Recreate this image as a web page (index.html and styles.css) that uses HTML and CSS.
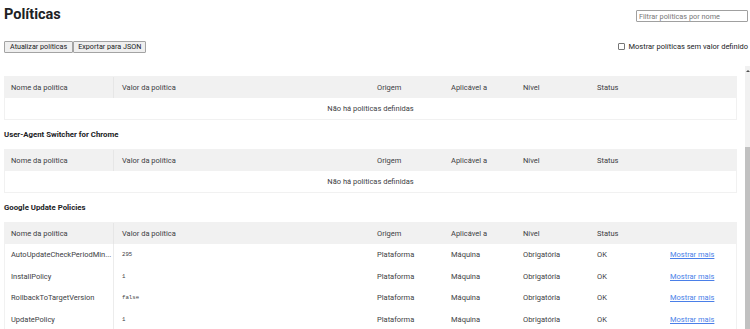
FILE: index.html
```html
<!DOCTYPE html>
<html lang="pt-BR">

<head>
    <meta charset="UTF-8">
    <meta name="viewport" content="width=device-width, initial-scale=1.0">
    <link rel="stylesheet" href="styles.css">
</head>

<body>

    <div class="page-header">
        <div class="header-top">
            <h1 class="page-title">Políticas</h1>
            <input type="text" class="filter-input" placeholder="Filtrar políticas por nome">
        </div>
        <div class="header-bottom">
            <div class="buttons">
                <button class="btn">Atualizar políticas</button>
                <button class="btn">Exportar para JSON</button>
            </div>
            <label class="show-unset">
                <input type="checkbox" class="unset-box">
                <span>Mostrar políticas sem valor definido</span>
            </label>
        </div>
    </div>

    <div class="main">
        <div class="content">

            <div class="policy-table">
                <div class="row head">
                    <div class="cell name">Nome da política</div>
                    <div class="cell value">Valor da política</div>
                    <div class="cell">Origem</div>
                    <div class="cell">Aplicável a</div>
                    <div class="cell">Nível</div>
                    <div class="cell">Status</div>
                    <div class="cell"></div>
                </div>
                <div class="empty-row">Não há políticas definidas</div>
            </div>

            <h3 class="section-title">User-Agent Switcher for Chrome</h3>
            <div class="policy-table">
                <div class="row head">
                    <div class="cell name">Nome da política</div>
                    <div class="cell value">Valor da política</div>
                    <div class="cell">Origem</div>
                    <div class="cell">Aplicável a</div>
                    <div class="cell">Nível</div>
                    <div class="cell">Status</div>
                    <div class="cell"></div>
                </div>
                <div class="empty-row">Não há políticas definidas</div>
            </div>

            <h3 class="section-title">Google Update Policies</h3>
            <div class="policy-table">
                <div class="row head">
                    <div class="cell name">Nome da política</div>
                    <div class="cell value">Valor da política</div>
                    <div class="cell">Origem</div>
                    <div class="cell">Aplicável a</div>
                    <div class="cell">Nível</div>
                    <div class="cell">Status</div>
                    <div class="cell"></div>
                </div>
                <div class="row">
                    <div class="cell name">AutoUpdateCheckPeriodMin...</div>
                    <div class="cell value"><span class="mono">295</span></div>
                    <div class="cell">Plataforma</div>
                    <div class="cell">Máquina</div>
                    <div class="cell">Obrigatória</div>
                    <div class="cell">OK</div>
                    <div class="cell"><a href="#" class="more">Mostrar mais</a></div>
                </div>
                <div class="row">
                    <div class="cell name">InstallPolicy</div>
                    <div class="cell value"><span class="mono">1</span></div>
                    <div class="cell">Plataforma</div>
                    <div class="cell">Máquina</div>
                    <div class="cell">Obrigatória</div>
                    <div class="cell">OK</div>
                    <div class="cell"><a href="#" class="more">Mostrar mais</a></div>
                </div>
                <div class="row">
                    <div class="cell name">RollbackToTargetVersion</div>
                    <div class="cell value"><span class="mono">false</span></div>
                    <div class="cell">Plataforma</div>
                    <div class="cell">Máquina</div>
                    <div class="cell">Obrigatória</div>
                    <div class="cell">OK</div>
                    <div class="cell"><a href="#" class="more">Mostrar mais</a></div>
                </div>
                <div class="row">
                    <div class="cell name">UpdatePolicy</div>
                    <div class="cell value"><span class="mono">1</span></div>
                    <div class="cell">Plataforma</div>
                    <div class="cell">Máquina</div>
                    <div class="cell">Obrigatória</div>
                    <div class="cell">OK</div>
                    <div class="cell"><a href="#" class="more">Mostrar mais</a></div>
                </div>
            </div>

        </div>

        <div class="scrollbar">
            <div class="scroll-arrow"></div>
            <div class="scroll-track"></div>
            <div class="scroll-thumb"></div>
        </div>
    </div>

</body>

</html>
```
FILE: styles.css
```css
body {
    margin: 0;
    padding: 0;
    font-family: Roboto, "Liberation Sans", sans-serif;
    font-size: 7.5px;
    color: #3c4043;
    background: #fff;
    height: 329px;
    overflow: hidden;
    display: flex;
    flex-direction: column;
}

.page-header {
    height: 66px;
    padding: 0 2px 0 4px;
    flex-shrink: 0;
}

.header-top {
    display: flex;
    justify-content: space-between;
    align-items: flex-start;
    height: 38px;
}

.page-title {
    margin: 6px 0 0;
    font-size: 14.5px;
    font-weight: 700;
    color: #202124;
}

.filter-input {
    margin-top: 10px;
    width: 112px;
    height: 12px;
    padding: 0 2px;
    box-sizing: border-box;
    border: 1px solid #a0a0a0;
    border-radius: 1px;
    font-family: inherit;
    font-size: 7.3px;
    color: #333;
}

.filter-input::placeholder {
    color: #777;
}

.header-bottom {
    display: flex;
    justify-content: space-between;
    align-items: flex-start;
}

.buttons {
    display: flex;
    margin-top: 3px;
}

.btn {
    height: 12px;
    padding: 0 5px;
    background-color: #efefef;
    border: 1px solid #a3a3a3;
    border-radius: 1px;
    font-family: inherit;
    font-size: 7.2px;
    color: #202124;
    line-height: 10px;
}

.btn + .btn {
    padding: 0 4px;
}

.show-unset {
    display: flex;
    align-items: center;
    gap: 4px;
    margin-top: 4px;
    color: #202124;
}

.unset-box {
    appearance: none;
    width: 7px;
    height: 7px;
    margin: 0;
    border: 1px solid #767676;
    border-radius: 1px;
    background: #fff;
}

.main {
    flex: 1;
    display: flex;
    min-height: 0;
}

.content {
    flex: 1;
    padding: 10px 8px 0 4px;
    overflow: hidden;
}

.policy-table {
    border: 1px solid #f1f1f1;
}

.row {
    display: grid;
    grid-template-columns: 109px 257px 74px 72px 74px 73px 1fr;
    height: 21.6px;
    align-items: stretch;
}

.row.head {
    background-color: #f1f1f1;
    height: 21px;
}

.cell {
    display: flex;
    align-items: center;
    padding-left: 6px;
    white-space: nowrap;
    overflow: hidden;
}

.cell.name {
    border-right: 1px solid #ececec;
}

.cell.value {
    padding-left: 8px;
}

.head .cell.name {
    border-right-color: #e6e6e6;
}

.mono {
    font-family: "Liberation Mono", "DejaVu Sans Mono", monospace;
    font-size: 5.7px;
}

.more {
    color: #4a7fe8;
    text-decoration: underline;
}

.empty-row {
    height: 21px;
    display: flex;
    align-items: center;
    justify-content: center;
}

.section-title {
    margin: 0;
    height: 29px;
    display: flex;
    align-items: center;
    font-size: 7.8px;
    font-weight: 700;
    color: #202124;
}

.scrollbar {
    width: 5px;
    display: flex;
    flex-direction: column;
    background-color: #f1f1f1;
}

.scroll-arrow {
    height: 8px;
}

.scroll-arrow::after {
    content: "";
    display: block;
    margin: 4px 0 0 1px;
    border-left: 2px solid transparent;
    border-right: 2px solid transparent;
    border-bottom: 2px solid #505050;
    width: 0;
}

.scroll-track {
    height: 73px;
}

.scroll-thumb {
    flex: 1;
    background-color: #c1c1c1;
}
```
